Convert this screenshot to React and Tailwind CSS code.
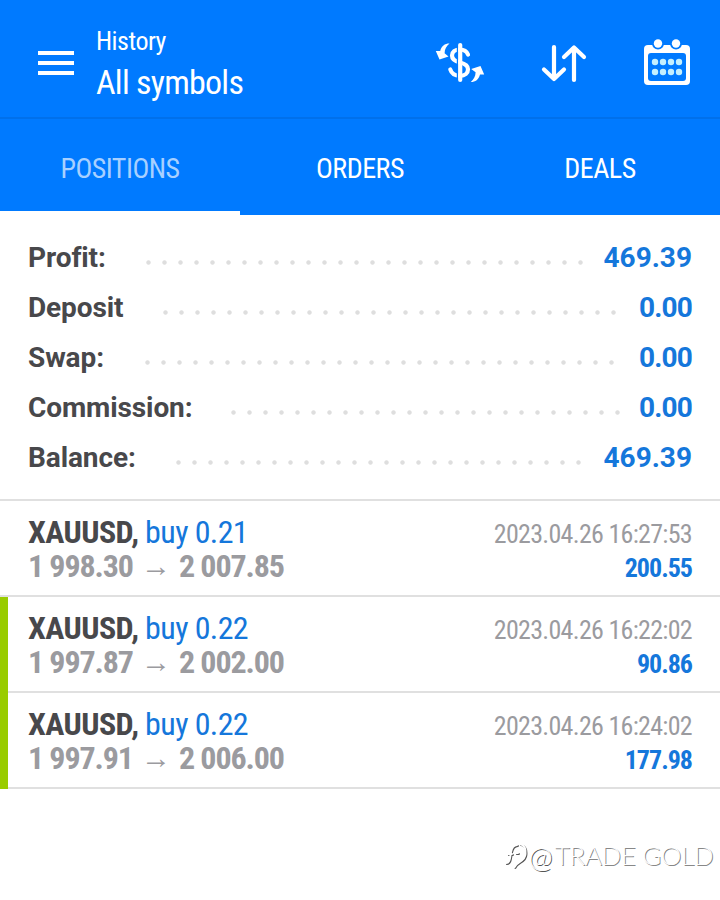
const summary = [
  { label: "Profit:", value: "469.39", labelWidth: "w-[112px]", dots: "w-[448px]", tracking: "" },
  { label: "Deposit", value: "0.00", labelWidth: "w-[129px]", dots: "w-[464px]", tracking: "tracking-[-0.8px]" },
  { label: "Swap:", value: "0.00", labelWidth: "w-[111px]", dots: "w-[480px]", tracking: "tracking-[-0.8px]" },
  { label: "Commission:", value: "0.00", labelWidth: "w-[197px]", dots: "w-[400px]", tracking: "tracking-[-0.8px]" },
  { label: "Balance:", value: "469.39", labelWidth: "w-[142px]", dots: "w-[416px]", tracking: "" },
];

const deals = [
  {
    symbol: "XAUUSD,",
    side: "buy 0.21",
    open: "1 998.30",
    close: "2 007.85",
    time: "2023.04.26 16:27:53",
    profit: "200.55",
  },
  {
    symbol: "XAUUSD,",
    side: "buy 0.22",
    open: "1 997.87",
    close: "2 002.00",
    time: "2023.04.26 16:22:02",
    profit: "90.86",
    marked: true,
  },
  {
    symbol: "XAUUSD,",
    side: "buy 0.22",
    open: "1 997.91",
    close: "2 006.00",
    time: "2023.04.26 16:24:02",
    profit: "177.98",
    marked: true,
  },
];

const tabs = ["POSITIONS", "ORDERS", "DEALS"];

const MenuIcon = () => (
  <svg width="36" height="26" viewBox="0 0 36 26" fill="currentColor">
    <rect y="1" width="36" height="4" />
    <rect y="11" width="36" height="4" />
    <rect y="21" width="36" height="4" />
  </svg>
);

const CurrencyIcon = () => (
  <svg width="50" height="42" viewBox="0 0 50 42" fill="none" stroke="currentColor">
    <path
      d="M33 13.500C31.500 10 28.500 8.500 25 8.500C20 8.500 17 11.200 17 14.500C17 18.600 20 20.300 25 21.500C30.500 22.800 33 24.500 33 28.200C33 32 30 34.800 25 34.800C20 34.800 16.500 32.500 15.300 28.500"
      strokeWidth="4.2"
      strokeLinecap="round"
    />
    <path d="M22.500 3V39" stroke="#007aff" strokeWidth="1.4" />
    <path d="M25.200 4V39" strokeWidth="4.2" strokeLinecap="round" />
    <path
      d="M14.500 2.500C9.500 2.500 6.500 5 5.200 10L0.800 10L4.500 18.500L13.500 15.500L9.600 12.200C9.600 8 11.500 4.800 14.500 2.500Z"
      fill="currentColor"
      stroke="none"
    />
    <path
      d="M35.800 41C40.500 41 43.800 38.500 45 33.500L49.200 33.500L45.500 25L36.200 28L40.600 31.300C40.600 35.500 38.500 38.500 35.800 41Z"
      fill="currentColor"
      stroke="none"
    />
  </svg>
);

const SortIcon = () => (
  <svg
    width="46"
    height="40"
    viewBox="0 0 46 40"
    fill="none"
    stroke="currentColor"
    strokeWidth="4.2"
    strokeLinecap="round"
    strokeLinejoin="round"
  >
    <path d="M13 4V36M3 26.500L13 36L23 26.500" />
    <path d="M33 37V4.500M23 14L33 4.500L43 14" />
  </svg>
);

const CalendarIcon = () => (
  <svg width="48" height="48" viewBox="0 0 48 48">
    <rect x="1" y="6" width="46" height="40" rx="4" fill="white" />
    <rect x="5" y="14" width="38" height="28" rx="3" fill="#007aff" />
    <circle cx="15" cy="4.500" r="6" fill="#007aff" />
    <circle cx="33" cy="4.500" r="6" fill="#007aff" />
    <circle cx="15" cy="4.500" r="4.200" fill="white" />
    <circle cx="33" cy="4.500" r="4.200" fill="white" />
    {[23, 33].map((cy) =>
      [12, 20, 28, 36].map((cx) => (
        <circle key={`${cx}-${cy}`} cx={cx} cy={cy} r="3.200" fill="#c4f0ff" />
      )),
    )}
  </svg>
);

const WatermarkIcon = () => (
  <svg
    width="24"
    height="28"
    viewBox="0 0 24 28"
    fill="none"
    strokeLinecap="round"
    strokeWidth="2"
  >
    {/* Shadow first, white strokes over it */}
    {["#555", "white"].map((color, i) => (
      <g key={color} stroke={color} transform={i === 0 ? "translate(0.9 0.9)" : undefined}>
        <path d="M2 21C6 21 6 16 7 10C8 5 10 3 13 3M4 12H8M12 11H14" />
        <path d="M16 2C20 3 22 6 21.500 12C21 20 13 19 10.500 25" />
      </g>
    ))}
  </svg>
);

const App = () => {
  return (
    <div className="h-[900px] w-[720px] overflow-hidden bg-white font-['Roboto_Condensed','Roboto',sans-serif] [font-stretch:75%]">
      {/* App bar */}
      <header className="flex h-[119px] items-start border-b-2 border-[#0070eb] bg-[#007aff] text-white">
        <div className="ml-[38px] mt-[50px]">
          <MenuIcon />
        </div>
        <div className="ml-[22px] mt-[24px] w-[339px] whitespace-nowrap">
          <p className="text-[26px] leading-[34px] tracking-[-0.5px]">History</p>
          <p className="mt-[4px] text-[34px] leading-[40px] tracking-[-0.75px]">All symbols</p>
        </div>
        <div className="mt-[41px]">
          <CurrencyIcon />
        </div>
        <div className="ml-[56px] mt-[43px]">
          <SortIcon />
        </div>
        <div className="ml-[56px] mt-[39px]">
          <CalendarIcon />
        </div>
      </header>

      {/* Tabs */}
      <nav className="grid h-[96px] grid-cols-3 bg-[#007aff] text-[28px] tracking-[-0.5px] text-white">
        {tabs.map((tab, i) => (
          <div
            key={tab}
            className={`flex items-center justify-center border-b-4 pt-2 ${
              i === 0 ? "border-white text-[#a8d0ff]" : "border-[#007aff]"
            }`}
          >
            {tab}
          </div>
        ))}
      </nav>

      {/* Account totals */}
      <section className="h-[286px] border-b-2 border-[#e0e0e0] px-7 pt-[18px] font-['Roboto',sans-serif] text-[28px] font-bold [font-stretch:100%]">
        {summary.map((row) => (
          <div key={row.label} className="flex h-[50px] items-center">
            <span
              className={`${row.labelWidth} shrink-0 whitespace-nowrap tracking-[-0.1px] text-[#48484b]`}
            >
              {row.label}
            </span>
            <span
              className={`${row.dots} mt-[10px] h-4 shrink-0 bg-[radial-gradient(circle_at_8.5px_7.5px,#dedede_1.8px,transparent_2.6px)] bg-[length:16px_16px]`}
            />
            <span className={`ml-auto text-[#1577db] ${row.tracking}`}>{row.value}</span>
          </div>
        ))}
      </section>

      {/* Closed positions */}
      <section className="h-[320px]">
        {deals.map((deal) => (
          <div
            key={deal.time}
            className="flex h-24 justify-between border-b-2 border-b-[#e0e0e0] pr-7"
          >
            <div className={`h-24 w-2 shrink-0 ${deal.marked ? "bg-[#99cc00]" : ""}`} />
            <div className="ml-5 mt-[14px] grow whitespace-nowrap text-[32px] leading-[34px]">
              <p className="tracking-[-0.6px]">
                <span className="font-bold text-[#48484b]">{deal.symbol}</span>{" "}
                <span className="text-[#1577db]">{deal.side}</span>
              </p>
              <p className="flex font-bold tracking-[-1.1px] text-[#9b9b9f]">
                <span className="w-[113px]">{deal.open}</span>
                <span className="w-[38px] text-[30px]">→</span>
                <span>{deal.close}</span>
              </p>
            </div>
            <div className="mt-4 text-right text-[26px] leading-[34px]">
              <p className="tracking-[-0.7px] text-[#9b9b9f]">{deal.time}</p>
              <p className="font-bold tracking-[-1px] text-[#1577db]">{deal.profit}</p>
            </div>
          </div>
        ))}
      </section>

      {/* Watermark */}
      <div className="mt-[15px] flex items-center justify-end pr-[7px] font-['Lato',sans-serif] text-[26px] font-light text-white">
        <WatermarkIcon />
        <span className="ml-px text-[29px] leading-[39px] [text-shadow:1px_1px_0.5px_#555]">@</span>
        <span className="ml-0.5 tracking-[-0.4px] [text-shadow:1px_1px_0.5px_#888]">TRADE GOLD</span>
      </div>
    </div>
  );
};

export default App;
